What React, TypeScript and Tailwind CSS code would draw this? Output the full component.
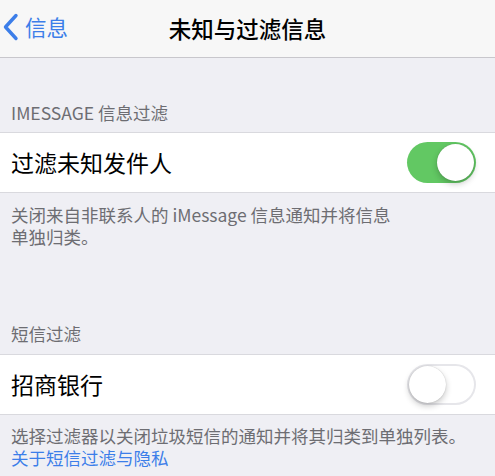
import React, { useState } from "react";

const font = {
  fontFamily:
    '"Noto Sans CJK SC", "Noto Sans", "Liberation Sans", sans-serif',
};

function Toggle({ on, onChange }: { on: boolean; onChange: () => void }) {
  return (
    <button
      type="button"
      role="switch"
      aria-checked={on}
      onClick={onChange}
      className={[
        "relative h-[41px] w-[69px] shrink-0 rounded-full transition-colors",
        on
          ? "bg-[#62c863]"
          : "bg-white shadow-[inset_0_0_0_2px_#e6e6ea]",
      ].join(" ")}
    >
      <span
        className={[
          "absolute top-[2px] h-[37px] w-[37px] rounded-full bg-white shadow-[0_3px_6px_rgba(0,0,0,0.22),0_0_1px_rgba(0,0,0,0.25)] transition-all",
          on ? "left-[30px]" : "left-[2px]",
        ].join(" ")}
      />
    </button>
  );
}

export default function App() {
  const [unknown, setUnknown] = useState(true);
  const [bank, setBank] = useState(false);

  return (
    <div
      style={font}
      className="flex h-[476px] w-[495px] flex-col overflow-hidden bg-[#efeff4]"
    >
      {/* nav bar */}
      <div className="relative flex h-[58px] shrink-0 items-center justify-center border-b border-[#c8c7cc] bg-[#f7f7f7]">
        <button
          type="button"
          className="absolute left-[2px] top-[13px] flex items-center gap-[6px] text-[#3c7ee9]"
        >
          <svg viewBox="0 0 16 28" className="h-[28px] w-[17px]" aria-hidden>
            <path
              d="M13.5 2.5 L3 14 L13.5 25.5"
              fill="none"
              stroke="currentColor"
              strokeWidth="3.4"
              strokeLinecap="round"
              strokeLinejoin="round"
            />
          </svg>
          <span className="text-[21.5px] leading-none">信息</span>
        </button>
        <h1 className="text-[22.5px] font-medium leading-none text-black">
          未知与过滤信息
        </h1>
      </div>

      {/* iMessage section */}
      <div className="px-[11px] pb-[8px] pt-[44px] text-[17.5px] leading-[22px] text-[#6d6d72]">
        IMESSAGE 信息过滤
      </div>
      <div className="flex h-[61px] items-center justify-between border-y border-[#d9d9de] bg-white pl-[11px] pr-[19px]">
        <span className="text-[23px] text-black">过滤未知发件人</span>
        <Toggle on={unknown} onChange={() => setUnknown((v) => !v)} />
      </div>
      <p className="px-[11px] pt-[11px] text-[17.5px] leading-[22px] text-[#6d6d72]">
        关闭来自非联系人的 iMessage 信息通知并将信息
        <br />
        单独归类。
      </p>

      {/* SMS section */}
      <div className="px-[11px] pb-[9px] pt-[75px] text-[17.5px] leading-[22px] text-[#6d6d72]">
        短信过滤
      </div>
      <div className="flex h-[61px] items-center justify-between border-y border-[#d9d9de] bg-white pl-[11px] pr-[19px]">
        <span className="text-[23px] text-black">招商银行</span>
        <Toggle on={bank} onChange={() => setBank((v) => !v)} />
      </div>
      <p className="px-[11px] pt-[10px] text-[17.5px] leading-[22px] text-[#6d6d72]">
        选择过滤器以关闭垃圾短信的通知并将其归类到单独列表。
        <br />
        <a href="#" className="text-[#3c7ee9]">
          关于短信过滤与隐私
        </a>
      </p>
    </div>
  );
}
